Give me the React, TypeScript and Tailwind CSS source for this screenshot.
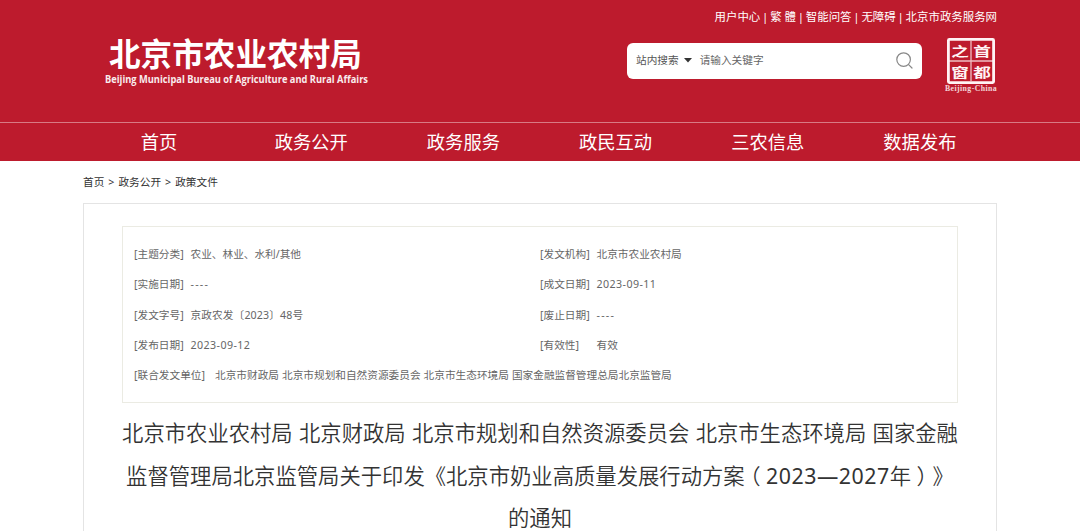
type Field = {
  label: string;
  value: string;
  valueClass?: string;
};

const topLinks = ["用户中心", "繁 體", "智能问答", "无障碍", "北京市政务服务网"];

const navItems = ["首页", "政务公开", "政务服务", "政民互动", "三农信息", "数据发布"];

const fields: Field[] = [
  { label: "[主题分类]", value: "农业、林业、水利/其他" },
  { label: "[发文机构]", value: "北京市农业农村局" },
  { label: "[实施日期]", value: "----", valueClass: "tracking-[1.25px]" },
  { label: "[成文日期]", value: "2023-09-11", valueClass: "tracking-[0.42px]" },
  { label: "[发文字号]", value: "京政农发〔2023〕48号", valueClass: "tracking-[0.12px]" },
  { label: "[废止日期]", value: "----", valueClass: "tracking-[1.25px]" },
  { label: "[发布日期]", value: "2023-09-12", valueClass: "tracking-[0.42px]" },
  { label: "[有效性]", value: "有效" },
];

function SiteLogo() {
  return (
    <div className="ml-[22px] mt-[36px] w-[268px] text-white">
      <p className="ml-[4px] whitespace-nowrap text-[31.6px] font-bold leading-[36px]">北京市农业农村局</p>
      <svg width="268" height="18" viewBox="0 0 268 18" className="block overflow-visible" fill="currentColor">
        <text
          x="0"
          y="11.3"
          textLength="263"
          lengthAdjust="spacingAndGlyphs"
          fontSize="9.8"
          fontWeight="700"
          fontFamily="Open Sans, Noto Sans, sans-serif"
          opacity="0.92"
        >
          Beijing Municipal Bureau of Agriculture and Rural Affairs
        </text>
      </svg>
    </div>
  );
}

function CapitalSeal() {
  return (
    <svg width="54" height="56" viewBox="0 0 54 56" className="block flex-shrink-0 text-[#fff3f4]" fill="currentColor">
      <rect x="4.4" y="1.4" width="45.2" height="43.2" rx="1" fill="none" stroke="currentColor" strokeWidth="2.8" />
      <path d="M27 3v40M5 23h44" stroke="currentColor" strokeWidth="1.3" opacity="0.75" />
      <g fontSize="16" fontWeight="700" textAnchor="middle" fontFamily="Noto Sans CJK SC, sans-serif">
        <text transform="translate(16 17.6) scale(1.1 .8)">之</text>
        <text transform="translate(38 17.6) scale(1.1 .8)">首</text>
        <text transform="translate(16 38.6) scale(1.1 .8)">窗</text>
        <text transform="translate(38 38.6) scale(1.1 .8)">都</text>
      </g>
      <text
        x="1"
        y="52.8"
        textLength="52"
        lengthAdjust="spacingAndGlyphs"
        fontSize="7.6"
        fontWeight="700"
        fontFamily="Liberation Serif, serif"
        letterSpacing="0.4"
        opacity="0.85"
      >
        Beijing-China
      </text>
    </svg>
  );
}

function SearchBox() {
  return (
    <div className="flex h-9 w-[295px] items-center rounded-md bg-white pl-[9px] pr-[9px] text-[10.66px] text-[#555]">
      <span>站内搜索</span>
      <svg width="8" height="5" viewBox="0 0 8 5" className="-mt-px ml-[5px]" fill="#333">
        <path d="M0 0h8L4 4.5z" />
      </svg>
      <span className="ml-[8px] flex-1 text-[#666]">请输入关键字</span>
      <svg width="17" height="17" viewBox="0 0 17 17" fill="none" stroke="#888" strokeWidth="1.2" strokeLinecap="round">
        <circle cx="7.6" cy="7.6" r="6.8" />
        <path d="M12.6 12.6l3.4 3.4" />
      </svg>
    </div>
  );
}

function Header() {
  return (
    <header className="bg-[#bd1b2d] text-white">
      <div className="mx-auto flex h-[122px] w-[914px] justify-between">
        <SiteLogo />
        <div className="flex flex-col items-end">
          <ul className="mt-[9px] flex h-4 items-center whitespace-nowrap text-[11.43px]">
            {topLinks.map((link, i) => (
              <li key={link} className="flex">
                {i > 0 && <span className="w-[9.9px] text-center">|</span>}
                {link}
              </li>
            ))}
          </ul>
          <div className="-mr-px mt-[13px] flex items-start gap-[22px]">
            <div className="mt-[4.5px]">
              <SearchBox />
            </div>
            <CapitalSeal />
          </div>
        </div>
      </div>
      <nav className="h-[39px] border-t border-[#d87a84]">
        <ul className="mx-auto grid h-full w-[914px] grid-cols-6 items-center pr-px text-center text-[18.3px]">
          {navItems.map((item) => (
            <li key={item}>{item}</li>
          ))}
        </ul>
      </nav>
    </header>
  );
}

function FieldTable() {
  return (
    <section className="h-[177px] border border-[#ebebe3] pl-[11px] pt-[12px] text-[10.66px] leading-[30.3px] text-[#666]">
      <div className="grid grid-cols-[406px_1fr]">
        {fields.map((field) => (
          <div key={field.label} className="flex">
            <span className="w-[56.5px]">{field.label}</span>
            <span className={field.valueClass}>{field.value}</span>
          </div>
        ))}
      </div>
      <div className="flex whitespace-nowrap">
        <span className="w-[81px]">[联合发文单位]</span>
        <span className="[word-spacing:0.3px]">
          北京市财政局 北京市规划和自然资源委员会 北京市生态环境局 国家金融监督管理总局北京监管局
        </span>
      </div>
    </section>
  );
}

function Paren({ children }: { children: string }) {
  return (
    <span className="inline-block w-[21.33px] text-center [font-feature-settings:'halt'] [text-spacing-trim:space-all]">
      {children}
    </span>
  );
}

export default function App() {
  return (
    <div className="h-[531px] overflow-hidden bg-white font-['Noto_Sans','Noto_Sans_CJK_SC',sans-serif]">
      <Header />
      <main className="mx-auto w-[914px]">
        <p className="flex h-[42px] items-center gap-1 pt-px text-[10.66px] text-[#333]">
          <span>首页</span>
          <span>&gt;</span>
          <span>政务公开</span>
          <span>&gt;</span>
          <span>政策文件</span>
        </p>
        <article className="h-[400px] border border-[#e4e4e4] px-[38px] pt-[22px]">
          <FieldTable />
          <h1 className="mt-[9px] text-center text-[21.33px] font-[350] leading-[42.66px] text-[#333] [text-spacing-trim:space-all] [word-spacing:0.8px]">
            <span className="block whitespace-nowrap">
              北京市农业农村局 北京财政局 北京市规划和自然资源委员会 北京市生态环境局 国家金融
            </span>
            <span className="block whitespace-nowrap">
              监督管理局北京监管局关于印发《北京市奶业高质量发展行动方案
              <Paren>（</Paren>
              <span className="font-normal tracking-[0.55px]">2023—2027</span>年
              <Paren>）</Paren>》
            </span>
            <span className="block whitespace-nowrap">的通知</span>
          </h1>
        </article>
      </main>
    </div>
  );
}
